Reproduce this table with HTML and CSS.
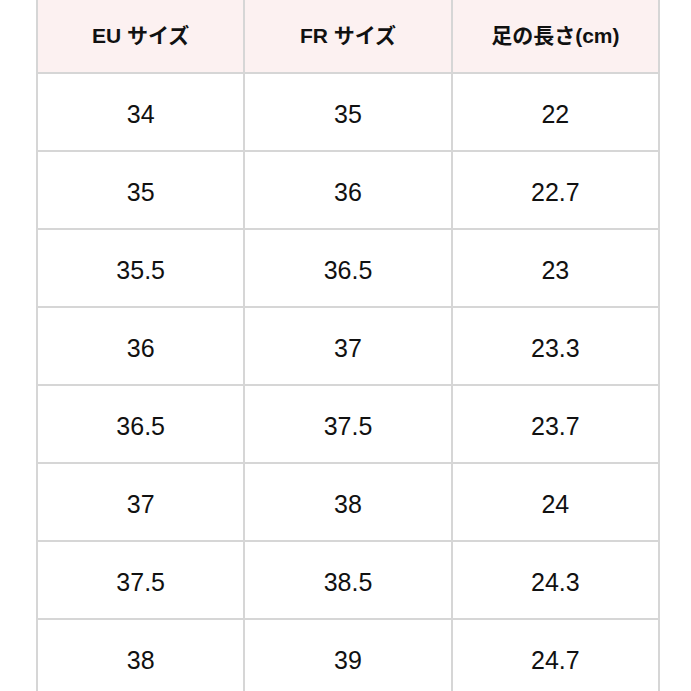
FILE: index.html
```html
<!DOCTYPE html>
<html lang="ja">
<head>
<meta charset="utf-8">
<link rel="stylesheet" href="styles.css">
</head>
<body>
<div class="wrap">
<table class="size-table">
<thead>
<tr><th>EU サイズ</th><th>FR サイズ</th><th>足の長さ(cm)</th></tr>
</thead>
<tbody>
<tr><td>34</td><td>35</td><td>22</td></tr>
<tr><td>35</td><td>36</td><td>22.7</td></tr>
<tr><td>35.5</td><td>36.5</td><td>23</td></tr>
<tr><td>36</td><td>37</td><td>23.3</td></tr>
<tr><td>36.5</td><td>37.5</td><td>23.7</td></tr>
<tr><td>37</td><td>38</td><td>24</td></tr>
<tr><td>37.5</td><td>38.5</td><td>24.3</td></tr>
<tr><td>38</td><td>39</td><td>24.7</td></tr>
</tbody>
</table>
</div>
</body>
</html>
```
FILE: styles.css
```css
html, body {
  margin: 0;
  padding: 0;
  background: #ffffff;
}
body {
  font-family: "Liberation Sans", "Noto Sans CJK JP", sans-serif;
  color: #111111;
  overflow: hidden;
  height: 691px;
}
.wrap {
  padding-left: 36px;
  margin-top: -2px;
}
.size-table {
  border-collapse: collapse;
  table-layout: fixed;
  width: 624px;
}
.size-table th,
.size-table td {
  border: 2px solid #d6d6d6;
  text-align: center;
  padding: 0;
}
.size-table th {
  background: #fcf1f1;
  height: 74px;
  font-size: 21px;
  font-weight: bold;
  padding-bottom: 5px;
  box-sizing: border-box;
}
.size-table td {
  height: 78px;
  font-size: 25px;
  padding-top: 5px;
  box-sizing: border-box;
  font-weight: normal;
}
```
